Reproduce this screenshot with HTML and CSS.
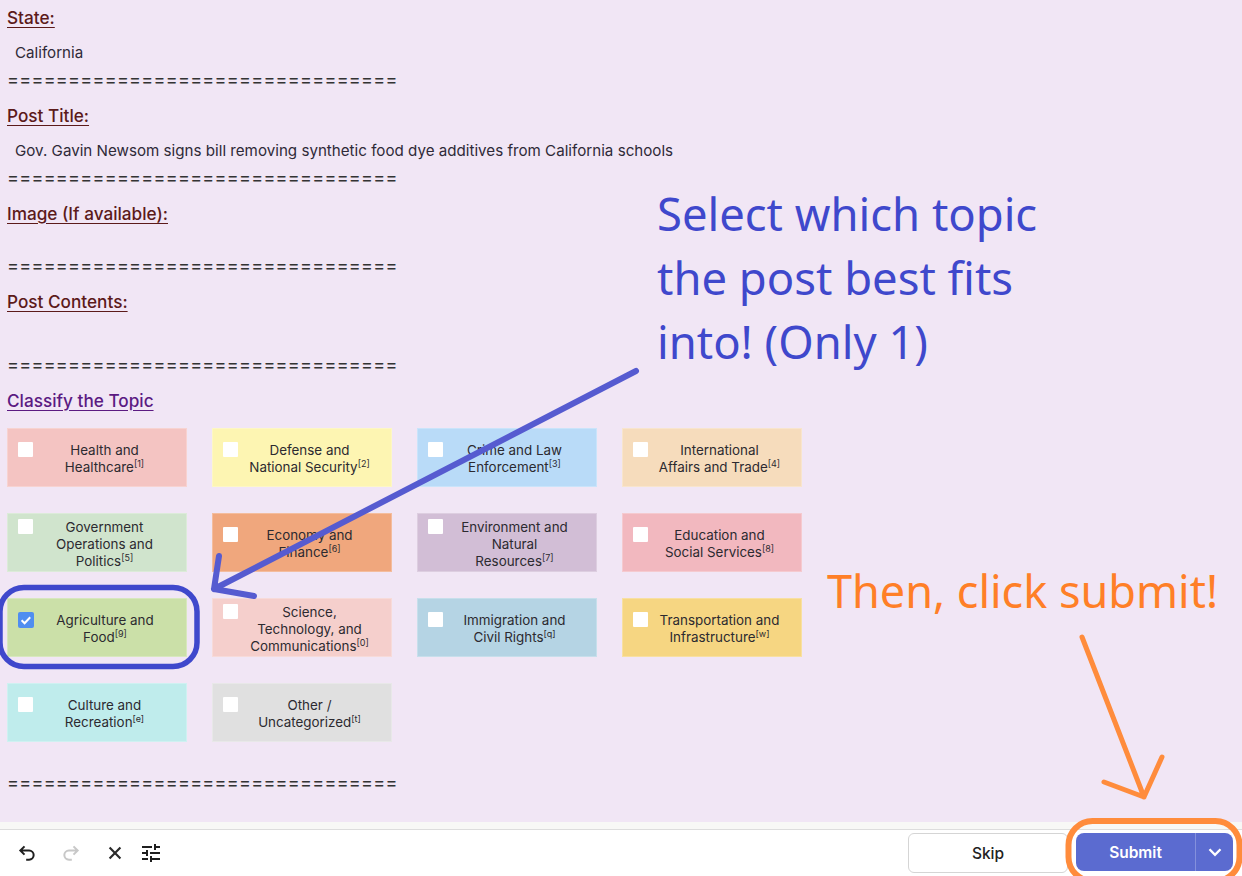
FILE: index.html
```html
<!DOCTYPE html>
<html lang="en">
<head>
    <meta charset="UTF-8" />
    <title>Classify the Topic</title>
    <link rel="stylesheet" href="styles.css">
</head>
<body>
    <div class="page">
        <div class="content">
            <h3 class="field-title first">State:</h3>
            <p class="field-value">California</p>
            <div class="sep">================================</div>

            <h3 class="field-title">Post Title:</h3>
            <p class="field-value">Gov. Gavin Newsom signs bill removing synthetic food dye additives from California schools</p>
            <div class="sep">================================</div>

            <h3 class="field-title">Image (If available):</h3>
            <div class="blank-small"></div>
            <div class="sep">================================</div>

            <h3 class="field-title">Post Contents:</h3>
            <div class="blank-large"></div>
            <div class="sep">================================</div>

            <h3 class="field-title topic-title">Classify the Topic</h3>

            <div class="topics">
                <div class="topic c1"><div class="topic-inner"><span class="box"></span><span class="topic-text">Health and<br>Healthcare<sup>[1]</sup></span></div></div>
                <div class="topic c2"><div class="topic-inner"><span class="box"></span><span class="topic-text">Defense and<br>National Security<sup>[2]</sup></span></div></div>
                <div class="topic c3"><div class="topic-inner"><span class="box"></span><span class="topic-text">Crime and Law<br>Enforcement<sup>[3]</sup></span></div></div>
                <div class="topic c4"><div class="topic-inner"><span class="box"></span><span class="topic-text">International<br>Affairs and Trade<sup>[4]</sup></span></div></div>

                <div class="topic c5"><div class="topic-inner"><span class="box"></span><span class="topic-text">Government<br>Operations and<br>Politics<sup>[5]</sup></span></div></div>
                <div class="topic c6"><div class="topic-inner"><span class="box"></span><span class="topic-text">Economy and<br>Finance<sup>[6]</sup></span></div></div>
                <div class="topic c7"><div class="topic-inner"><span class="box"></span><span class="topic-text">Environment and<br>Natural<br>Resources<sup>[7]</sup></span></div></div>
                <div class="topic c8"><div class="topic-inner"><span class="box"></span><span class="topic-text">Education and<br>Social Services<sup>[8]</sup></span></div></div>

                <div class="topic c9"><div class="topic-inner"><span class="box checked"><svg viewBox="0 0 16 16" width="16" height="16"><path d="M3.6 8.2l3 3 5.6-6" fill="none" stroke="#fff" stroke-width="2"/></svg></span><span class="topic-text">Agriculture and<br>Food<sup>[9]</sup></span></div></div>
                <div class="topic c10"><div class="topic-inner"><span class="box"></span><span class="topic-text">Science,<br>Technology, and<br>Communications<sup>[0]</sup></span></div></div>
                <div class="topic c11"><div class="topic-inner"><span class="box"></span><span class="topic-text">Immigration and<br>Civil Rights<sup>[q]</sup></span></div></div>
                <div class="topic c12"><div class="topic-inner"><span class="box"></span><span class="topic-text">Transportation and<br>Infrastructure<sup>[w]</sup></span></div></div>

                <div class="topic c13"><div class="topic-inner"><span class="box"></span><span class="topic-text">Culture and<br>Recreation<sup>[e]</sup></span></div></div>
                <div class="topic c14"><div class="topic-inner"><span class="box"></span><span class="topic-text">Other /<br>Uncategorized<sup>[t]</sup></span></div></div>
            </div>

            <div class="sep last">================================</div>
        </div>

        <div class="strip"></div>
        <div class="toolbar">
            <div class="tools">
                <svg class="tool undo" viewBox="0 0 24 24" width="20" height="20"><path d="M9 14L4 9l5-5M4 9h10.5a5.5 5.5 0 0 1 0 11H11" fill="none" stroke="#1f1f1f" stroke-width="2.4"/></svg>
                <svg class="tool redo" viewBox="0 0 24 24" width="20" height="20"><path d="M15 14l5-5-5-5M20 9H9.5a5.5 5.5 0 0 0 0 11H13" fill="none" stroke="#c8c8c8" stroke-width="2.4"/></svg>
                <svg class="tool close" viewBox="0 0 24 24" width="20" height="20"><path d="M5.5 5.5l13 13M18.5 5.5l-13 13" fill="none" stroke="#2a2a2a" stroke-width="2.6"/></svg>
                <svg class="tool tune" viewBox="0 0 24 24" width="24" height="24"><path d="M3 17v2h6v-2H3zM3 5v2h10V5H3zm10 16v-2h8v-2h-8v-2h-2v6h2zM7 9v2H3v2h4v2h2V9H7zm14 4v-2H11v2h10zm-6-4h2V7h4V5h-4V3h-2v6z" fill="#1f1f1f"/></svg>
            </div>
            <div class="actions">
                <button class="skip">Skip</button>
                <div class="submit">
                    <button class="submit-main">Submit</button>
                    <button class="submit-more"><svg viewBox="0 0 24 24" width="22" height="22"><path d="M6 9l6 6 6-6" fill="none" stroke="#fff" stroke-width="2.6"/></svg></button>
                </div>
            </div>
        </div>
    </div>

    <!-- Anotacoes desenhadas por cima da tela -->
    <div class="note note-blue">Select which topic<br>the post best fits<br>into! (Only 1)</div>
    <div class="note note-orange">Then, click submit!</div>
    <svg class="marks" viewBox="0 0 1242 876" width="1242" height="876">
        <rect x="0" y="587.5" width="197" height="79" rx="24" fill="none" stroke="#3f48cc" stroke-width="5.5"/>
        <path d="M636 371L214 589M219 556L214 589L254 596" fill="none" stroke="#565bd0" stroke-width="6" stroke-linecap="round" stroke-linejoin="round"/>
        <rect x="1068.5" y="821" width="171" height="60" rx="24" fill="none" stroke="#ff8c3c" stroke-width="6"/>
        <path d="M1082 637L1144 797M1162 757L1144 797L1104 782" fill="none" stroke="#ff8c3c" stroke-width="5" stroke-linecap="round" stroke-linejoin="round"/>
    </svg>
</body>
</html>
```

FILE: styles.css
```css
/* Estilos gerais */
html, body {
    margin: 0;
    padding: 0;
    height: 100%;
    overflow: hidden;
}

body {
    font-family: Inter, "Open Sans", sans-serif;
    color: #2f2a38;
    background-color: #fff;
    position: relative;
}

.page {
    height: 876px;
    display: flex;
    flex-direction: column;
}

/* Area principal */
.content {
    flex: 1;
    background-color: #f1e6f5;
    padding: 0 7px;
    overflow: hidden;
}

.field-title {
    margin: 0;
    padding-top: 16px;
    font-size: 17.2px;
    line-height: 20px;
    font-weight: 500;
    color: #5c1a1a;
    text-decoration: underline;
    text-underline-offset: 3px;
}

.field-title.first {
    padding-top: 8px;
}

.field-value {
    margin: 15px 0 0 8px;
    font-size: 15.17px;
    line-height: 20px;
}

.sep {
    margin-top: 7px;
    height: 20px;
    line-height: 20px;
    font-size: 18px;
    letter-spacing: 0.3px;
    color: #333;
    white-space: nowrap;
}

.blank-small {
    height: 25px;
}

.blank-large {
    height: 36px;
}

.topic-title {
    color: #5b1a82;
}

/* Grade de topicos */
.topics {
    display: grid;
    grid-template-columns: repeat(4, 180px);
    grid-auto-rows: 59px;
    column-gap: 25px;
    row-gap: 26px;
    margin-top: 17px;
}

.topic {
    display: flex;
    align-items: center;
    box-sizing: border-box;
    padding-top: 3px;
    border: 1px solid rgba(255,255,255,0.25);
}

.topic-inner {
    display: flex;
    align-items: flex-start;
    width: 100%;
}

.box {
    flex: none;
    width: 15px;
    height: 15px;
    margin: 0 0 0 10px;
    background-color: #fff;
    border-radius: 1px;
}

.box.checked {
    width: 16px;
    height: 16px;
    background-color: #4f8ef0;
    border-radius: 2px;
}

.topic-text {
    flex: 1;
    text-align: center;
    font-size: 13.4px;
    line-height: 17px;
    color: #2c2a30;
    padding-right: 10px;
    white-space: nowrap;
}

.topic-text sup {
    font-size: 9px;
    line-height: 0;
}

.c1 { background-color: #f4c4c2; }
.c2 { background-color: #fdf5b2; }
.c3 { background-color: #b9dbf8; }
.c4 { background-color: #f6dcbc; }
.c5 { background-color: #d0e4cd; }
.c6 { background-color: #f0a77d; }
.c7 { background-color: #d2bed6; }
.c8 { background-color: #f2b8bf; }
.c9 { background-color: #cbe0a8; }
.c10 { background-color: #f5cfcc; }
.c11 { background-color: #b5d4e4; }
.c12 { background-color: #f6d682; }
.c13 { background-color: #bfecec; }
.c14 { background-color: #e0e0e0; }

.sep.last {
    margin-top: 31px;
}

/* Barra inferior */
.strip {
    height: 7px;
    background-color: #f8f8f6;
}

.toolbar {
    height: 47px;
    box-sizing: border-box;
    border-top: 1px solid #ddd;
    background-color: #fff;
    display: flex;
    align-items: center;
    justify-content: space-between;
    padding: 0 9px 0 17px;
}

.tools {
    display: flex;
    align-items: center;
}

.tool.redo { margin-left: 24px; }
.tool.close { margin-left: 24px; }
.tool.tune { margin-left: 14px; }

.actions {
    display: flex;
    align-items: flex-start;
    gap: 8px;
}

button {
    font-family: inherit;
    font-size: 15.5px;
    font-weight: 500;
    cursor: pointer;
}

.skip {
    width: 160px;
    height: 40px;
    background-color: #fff;
    color: #222;
    border: 1px solid #d5d5d5;
    border-radius: 6px;
}

.submit {
    display: flex;
    height: 38px;
    width: 157px;
    border-radius: 8px;
    overflow: hidden;
    background-color: #5b6bd0;
}

.submit-main {
    width: 119px;
    border: none;
    background: none;
    color: #fff;
    font-weight: 600;
}

.submit-more {
    flex: 1;
    border: none;
    border-left: 1px solid #8490dc;
    background: none;
    display: flex;
    align-items: center;
    justify-content: center;
    padding: 0;
}

/* Anotacoes */
.note {
    position: absolute;
    font-family: "Noto Sans", sans-serif;
    line-height: 64px;
    white-space: nowrap;
}

.note-blue {
    left: 657px;
    top: 181px;
    font-size: 45.4px;
    color: #3f48cc;
}

.note-orange {
    left: 827px;
    top: 559px;
    font-size: 45px;
    color: #ff7f27;
}

.marks {
    position: absolute;
    left: 0;
    top: 0;
    pointer-events: none;
}
```
